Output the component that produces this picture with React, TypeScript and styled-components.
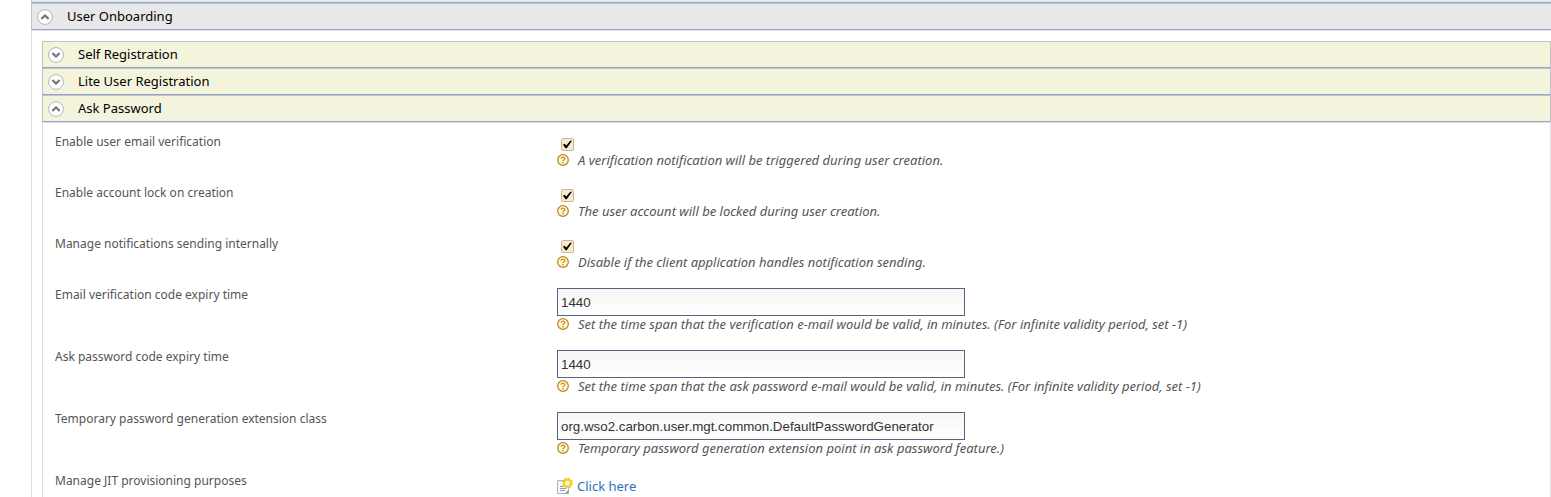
import React, { useId } from "react";
import styled, { createGlobalStyle } from "styled-components";

const Global = createGlobalStyle`
  *, *::before, *::after { box-sizing: border-box; }
  body {
    margin: 0;
    background: #fff;
    color: #555;
    font-family: "Noto Sans", sans-serif;
    font-size: 13px;
    line-height: 16px;
    overflow-x: hidden;
  }
`;

const Page = styled.main`
  margin-left: 31px;
`;

const PreviousSection = styled.div`
  height: 3px;
  background: #e8e8e8;
  border-left: 1px solid #bcc0c6;
  border-bottom: 1px solid #8faad2;
`;

const Heading = styled.h2<{ $nested?: boolean }>`
  margin: 0;
  background: ${(p) => (p.$nested ? "#f4f4dc" : "#e8e8e8")};
  border: 1px solid #c0c3c7;
  border-right-width: ${(p) => (p.$nested ? "1px" : "0")};
  border-bottom-color: #94a5c5;
  font-size: 13px;
  font-weight: 400;
`;

const Toggle = styled.button`
  display: flex;
  align-items: center;
  gap: 14px;
  width: 100%;
  height: 25px;
  padding: 0 5px;
  border: 0;
  background: none;
  color: #000;
  font: inherit;
  line-height: 18px;
  text-align: left;
  cursor: pointer;
`;

const Title = styled.span`
  padding-bottom: 2px;
`;

const SectionBody = styled.div`
  border-left: 1px solid #e0e0e0;
  border-top: 1px solid #e0e0e0;
  padding: 10px 0 0 10px;
`;

const Form = styled.form`
  display: flex;
  flex-direction: column;
  gap: 16px;
  padding: 10px 1px 16px 12px;
  border: 1px solid #e0e0e0;
  border-bottom: 0;
`;

const Row = styled.div`
  display: grid;
  grid-template-columns: 1fr 2fr;
  column-gap: 6px;
`;

const Label = styled.label`
  font-size: 12px;
  line-height: 18px;
`;

const Control = styled.div`
  display: flex;
  flex-direction: column;
  align-items: flex-start;
`;

const Checkbox = styled.input`
  appearance: none;
  display: grid;
  place-items: center;
  width: 13px;
  height: 13px;
  margin: 5px 4px 1px;
  border: 1px solid #c8b898;
  border-radius: 2px;
  background: #fbebcd;

  &:checked::before {
    content: "";
    width: 9px;
    height: 9px;
    background: #000;
    clip-path: polygon(0 52%, 18% 42%, 36% 62%, 80% 8%, 100% 8%, 42% 92%, 28% 92%);
  }
`;

const TextBox = styled.input`
  width: 408px;
  max-width: 100%;
  height: 28px;
  margin-top: 2px;
  padding: 0 3px;
  border: 1px solid #55657f;
  border-radius: 0;
  background: linear-gradient(#f6f6f6, #fff);
  color: #333;
  font-family: "Liberation Sans", sans-serif;
`;

const Hint = styled.p`
  display: flex;
  align-items: center;
  gap: 9px;
  margin: 0;
  font-style: italic;
`;

const AddLink = styled.a`
  display: flex;
  align-items: center;
  gap: 4px;
  margin-top: 6px;
  color: #2a72b8;
  text-decoration: none;
`;

function Chevron({ open }: { open: boolean }) {
  return (
    <svg width="16" height="16" viewBox="0 0 16 16" fill="none" aria-hidden="true">
      <circle cx="8" cy="8" r="7.4" fill="#fff" stroke="#b4b4b4" />
      <path d={open ? "M4.4 9.9 8 6.5l3.6 3.4" : "M4.4 6.1 8 9.500l3.600-3.400"} stroke="#757575" strokeWidth="2.200" />
    </svg>
  );
}

function HelpIcon() {
  return (
    <svg width="12" height="12" viewBox="0 0 12 12" fill="none" aria-hidden="true">
      <circle cx="6" cy="6" r="5.3" fill="#fffbe0" stroke="#b98a20" strokeWidth="1.3" />
      <path d="M4.2 4.7C4.2 2.6 7.8 2.6 7.8 4.6 7.8 5.8 6 5.8 6 7.2" stroke="#e08a1c" strokeWidth="1.4" />
      <path d="M6 8.1v1.4" stroke="#e08a1c" strokeWidth="1.5" />
    </svg>
  );
}

function AddPageIcon() {
  return (
    <svg width="16" height="16" viewBox="0 0 16 16" fill="none" aria-hidden="true">
      <path d="M.5 2.5h11v13H.5z" fill="#f4f6f8" stroke="#b2b5b8" />
      <path d="M8 15.5l3.5-3.5v3.5z" fill="#8c9196" />
      <path d="M3 8.5h4M3 10.500h6M3 12.500h5" stroke="#7fa3c4" />
      <circle cx="10.500" cy="5" r="4.700" stroke="#f2cf0c" strokeWidth="1.600" strokeDasharray="1.846 1.846" />
      <circle cx="10.500" cy="5" r="3.500" fill="#f4f2e2" stroke="#f2cf0c" strokeWidth="1.900" />
    </svg>
  );
}

function SectionHeading({ title, open = false, nested }: { title: string; open?: boolean; nested?: boolean }) {
  return (
    <Heading as={nested ? "h3" : "h2"} $nested={nested}>
      <Toggle type="button" aria-expanded={open}>
        <Chevron open={open} />
        <Title>{title}</Title>
      </Toggle>
    </Heading>
  );
}

function Field({ label, hint, value }: { label: string; hint: string; value?: string }) {
  const id = useId();
  return (
    <Row>
      <Label htmlFor={id}>{label}</Label>
      <Control>
        {value === undefined ? (
          <Checkbox id={id} type="checkbox" defaultChecked />
        ) : (
          <TextBox id={id} type="text" defaultValue={value} />
        )}
        <Hint>
          <HelpIcon />
          {hint}
        </Hint>
      </Control>
    </Row>
  );
}

const fields = [
  { label: "Enable user email verification", hint: "A verification notification will be triggered during user creation." },
  { label: "Enable account lock on creation", hint: "The user account will be locked during user creation." },
  { label: "Manage notifications sending internally", hint: "Disable if the client application handles notification sending." },
  {
    label: "Email verification code expiry time",
    value: "1440",
    hint: "Set the time span that the verification e-mail would be valid, in minutes. (For infinite validity period, set -1)",
  },
  {
    label: "Ask password code expiry time",
    value: "1440",
    hint: "Set the time span that the ask password e-mail would be valid, in minutes. (For infinite validity period, set -1)",
  },
  {
    label: "Temporary password generation extension class",
    value: "org.wso2.carbon.user.mgt.common.DefaultPasswordGenerator",
    hint: "Temporary password generation extension point in ask password feature.)",
  },
];

export default function App() {
  return (
    <>
      <Global />
      <Page>
        <PreviousSection />
        <SectionHeading title="User Onboarding" open />
        <SectionBody>
          <SectionHeading title="Self Registration" nested />
          <SectionHeading title="Lite User Registration" nested />
          <SectionHeading title="Ask Password" nested open />
          <Form>
            {fields.map((f) => (
              <Field key={f.label} {...f} />
            ))}
            <Row>
              <Label as="span">Manage JIT provisioning purposes</Label>
              <Control>
                <AddLink href="#purposes">
                  <AddPageIcon />
                  Click here
                </AddLink>
              </Control>
            </Row>
          </Form>
        </SectionBody>
      </Page>
    </>
  );
}
